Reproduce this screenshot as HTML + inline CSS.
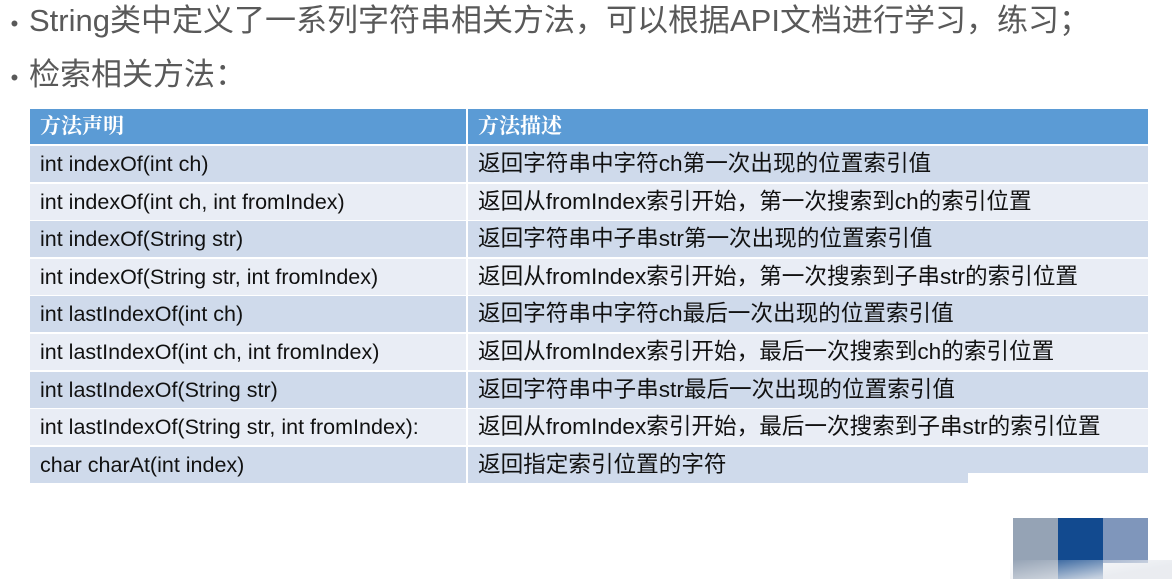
<!DOCTYPE html>
<html><head><meta charset="utf-8"><style>
*{box-sizing:border-box}
body{margin:0;width:1172px;height:579px;background:#fff;position:relative;overflow:hidden;font-family:"Liberation Sans","Noto Sans CJK SC",sans-serif}
.t{position:absolute;left:0;font-size:31px;color:#595959;white-space:nowrap;line-height:40px}
.t b{font-weight:normal;display:inline-block;width:29px;text-align:center;font-size:22px}
.r{position:absolute;left:30px;width:1118px;height:36px;line-height:36px;white-space:nowrap;color:#111}
.r div{position:absolute;top:0;height:36px}
.a{left:0;width:436px;padding-left:10px;font-size:21.5px}
.b{left:438px;width:680px;padding-left:10px;font-size:22.6px}
.d div{background:#cfdaeb}.l div{background:#e9edf5}
.h div{background:#5b9bd5;color:#fff;font-family:"Liberation Serif","Noto Serif CJK SC",serif;font-size:21px;font-weight:bold}
</style></head><body>
<div class="t" style="top:1px">
<b>•</b>String类中定义了一系列字符串相关方法，可以根据API文档进行学习，练习；</div>
<div class="t" style="top:55px"><b>•</b>检索相关方法：</div>
<div class="r h" style="top:109px;height:35px"><div class="a" style="height:35px;line-height:35px">方法声明</div><div class="b" style="height:35px;line-height:35px">方法描述</div></div>
<div class="r d" style="top:146px"><div class="a">int indexOf(int ch)</div><div class="b">返回字符串中字符ch第一次出现的位置索引值</div></div>
<div class="r l" style="top:183.6px"><div class="a">int indexOf(int ch, int fromIndex)</div><div class="b">返回从fromIndex索引开始，第一次搜索到ch的索引位置</div></div>
<div class="r d" style="top:221.2px"><div class="a">int indexOf(String str)</div><div class="b">返回字符串中子串str第一次出现的位置索引值</div></div>
<div class="r l" style="top:258.8px"><div class="a">int indexOf(String str, int fromIndex)</div><div class="b">返回从fromIndex索引开始，第一次搜索到子串str的索引位置</div></div>
<div class="r d" style="top:296.4px"><div class="a">int lastIndexOf(int ch)</div><div class="b">返回字符串中字符ch最后一次出现的位置索引值</div></div>
<div class="r l" style="top:334px"><div class="a">int lastIndexOf(int ch, int fromIndex)</div><div class="b">返回从fromIndex索引开始，最后一次搜索到ch的索引位置</div></div>
<div class="r d" style="top:371.6px"><div class="a">int lastIndexOf(String str)</div><div class="b">返回字符串中子串str最后一次出现的位置索引值</div></div>
<div class="r l" style="top:409.2px"><div class="a">int lastIndexOf(String str, int fromIndex):</div><div class="b">返回从fromIndex索引开始，最后一次搜索到子串str的索引位置</div></div>
<div class="r d" style="top:446.8px"><div class="a">char charAt(int index)</div><div class="b">返回指定索引位置的字符</div></div>
<div style="position:absolute;left:968px;top:473px;width:204px;height:14px;background:#fff"></div>
<div style="position:absolute;left:1013px;top:518px;width:45px;height:61px;background:#95a3b5"></div>
<div style="position:absolute;left:1058px;top:518px;width:45px;height:61px;background:#124a8f"></div>
<div style="position:absolute;left:1103px;top:518px;width:45px;height:45px;background:#7f96bb"></div>
<div style="position:absolute;left:1010px;top:560px;width:162px;height:19px;background:linear-gradient(170deg,rgba(255,255,255,0) 0%,rgba(230,233,238,.85) 70%)"></div>
</body></html>
